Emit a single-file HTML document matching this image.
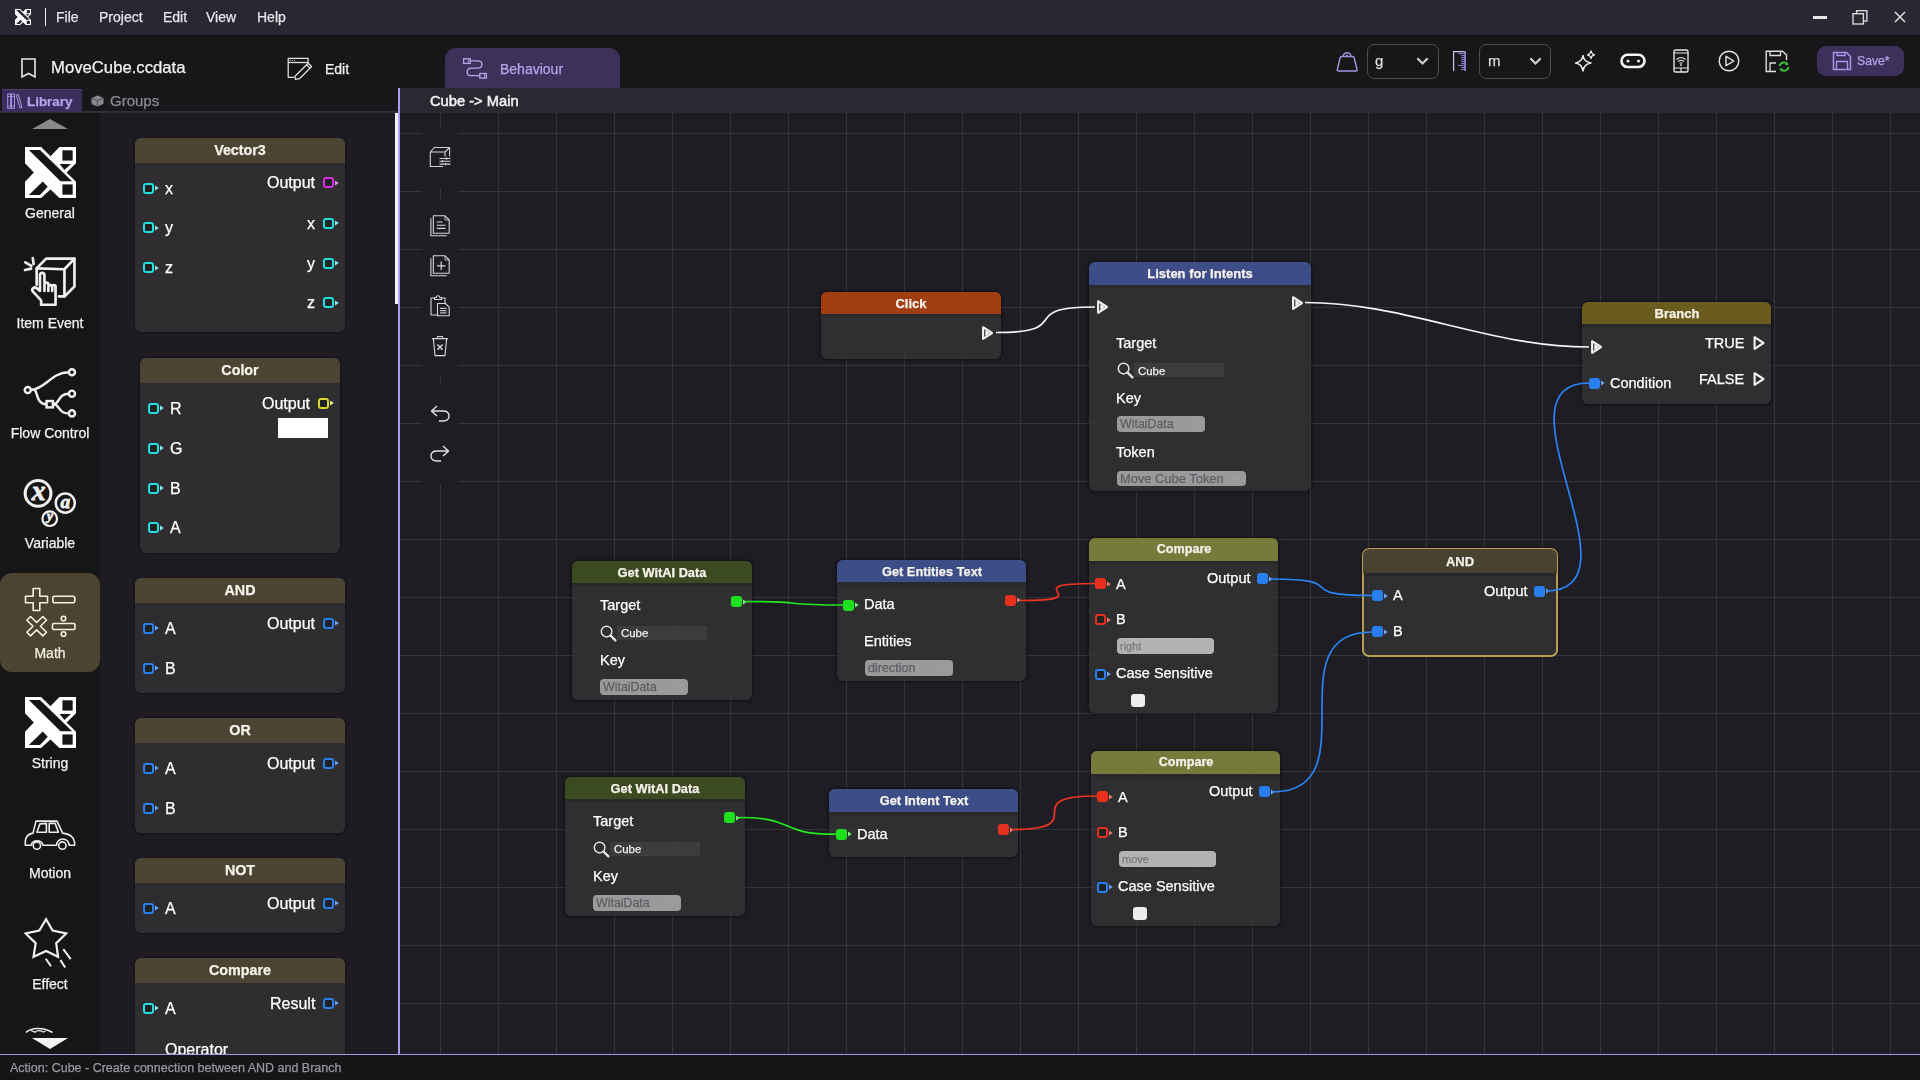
<!DOCTYPE html>
<html><head><meta charset="utf-8">
<style>
*{margin:0;padding:0;box-sizing:border-box}
html,body{width:1920px;height:1080px;overflow:hidden;background:#161517;font-family:"Liberation Sans",sans-serif;color:#fff}
.a{position:absolute}
.t{position:absolute;white-space:nowrap;line-height:normal;will-change:transform;-webkit-text-stroke:0.25px currentColor}
svg{overflow:visible}
</style></head><body>
<div class="a" style="left:0px;top:0px;width:1920px;height:35px;background:#2a2632;"></div>
<div class="a" style="left:0px;top:35px;width:1920px;height:53px;background:#171618;"></div>
<div class="a" style="left:0px;top:35px;width:1920px;height:2px;background:#121114;"></div>
<div class="a" style="left:0px;top:113px;width:100px;height:942px;background:#171617;"></div>
<div class="a" style="left:100px;top:113px;width:298px;height:942px;background:#1e1c22;"></div>
<div class="a" style="left:0px;top:88px;width:398px;height:23px;background:#18171a;"></div>
<div class="a" style="left:0px;top:111px;width:398px;height:2px;background:#302e3a;"></div>
<div class="a" style="left:400px;top:113px;width:1520px;height:941px;background-color:#1e1d23;background-image:linear-gradient(to right,#35343b 0,#35343b 1px,transparent 1px),linear-gradient(to bottom,#35343b 0,#35343b 1px,transparent 1px);background-size:58px 58px;background-position:40px 20px"></div>
<div class="a" style="left:400px;top:88px;width:1520px;height:25px;background:#2b2832;"></div>
<div class="a" style="left:398px;top:88px;width:2px;height:967px;background:#ad9bee;"></div>
<div class="a" style="left:0px;top:1055px;width:1920px;height:25px;background:#151416;"></div>
<div class="a" style="left:0px;top:1054px;width:1920px;height:1px;background:#a897e2;"></div>
<svg class="a" style="left:15px;top:9px;" width="16" height="16" viewBox="80 95 920 920"><path d="M80,95 L370,95 L540,260 L700,95 L1000,95 L1000,390 L830,555 L1000,720 L1000,1015 L700,1015 L540,860 L370,1015 L80,1015 L80,720 L240,555 L80,390Z" fill="#fff"/><path d="M150,150 L350,150 L930,715 L720,715Z" fill="#2a2632"/><path d="M755,155 L940,155 L940,340 L755,340Z" fill="#2a2632"/><path d="M705,400 L910,400 L790,510Z" fill="#2a2632"/><path d="M755,770 L940,770 L940,955 L755,955Z" fill="#2a2632"/><path d="M150,960 L400,718 L490,810 L350,960Z" fill="#2a2632"/></svg>
<div class="a" style="left:45px;top:8px;width:1px;height:18px;background:#eeeef2;"></div>
<div class="t" style="left:55.7px;top:9.33px;font-size:14px;color:#e6e4ea;">File</div>
<div class="t" style="left:98.8px;top:9.33px;font-size:14px;color:#e6e4ea;">Project</div>
<div class="t" style="left:162.7px;top:9.33px;font-size:14px;color:#e6e4ea;">Edit</div>
<div class="t" style="left:206.2px;top:9.33px;font-size:14px;color:#e6e4ea;">View</div>
<div class="t" style="left:256.6px;top:9.33px;font-size:14px;color:#e6e4ea;">Help</div>
<div class="a" style="left:1813px;top:16px;width:14px;height:2.5px;background:#e6e6e6;"></div>
<svg class="a" style="left:1850px;top:8px;" width="20" height="18" viewBox="0 0 20 18"><rect x="6.6" y="2.7" width="10.3" height="10.3" fill="none" stroke="#d8d8d8" stroke-width="1.4"/><rect x="3" y="5.7" width="10.4" height="10.3" fill="#2a2632" stroke="#d8d8d8" stroke-width="1.4"/></svg>
<svg class="a" style="left:1894px;top:11px;" width="12" height="12" viewBox="0 0 12 12"><path d="M1,1 L11,11 M11,1 L1,11" stroke="#e0e0e0" stroke-width="1.5"/></svg>
<svg class="a" style="left:21px;top:58px;" width="15" height="20" viewBox="0 0 15 20"><path d="M1,1 L14,1 L14,19 L7.5,15.5 L1,19Z" fill="none" stroke="#e8e8e8" stroke-width="1.6" stroke-linejoin="miter"/></svg>
<div class="t" style="left:51.0px;top:58.49px;font-size:16.7px;color:#f2f2f2;">MoveCube.ccdata</div>
<svg class="a" style="left:287px;top:57px;" width="26" height="24" viewBox="0 0 26 24"><g fill="none" stroke="#e4e4e4" stroke-width="1.25" stroke-linejoin="round"><path d="M21.1,6 L21.1,1.4 L1.2,1.4 L1.2,20.3 L7,20.3"/><path d="M1.2,5.5 L21.1,5.5"/><path d="M8,19.3 L21.1,6.3 L24.6,9.5 L12.5,21.7 L8.4,22.4Z"/><path d="M19.6,7.9 L23,11.1"/></g><path d="M2.6,3.5 L3.6,3.5 M4.8,3.5 L5.8,3.5 M7,3.5 L8,3.5" stroke="#cfcfcf" stroke-width="1.2"/></svg>
<div class="t" style="left:325.0px;top:60.53px;font-size:14px;color:#f2f2f2;">Edit</div>
<div class="a" style="left:445px;top:48px;width:175px;height:40px;background:#3c3158;border-radius:11px 11px 0 0"></div>
<svg class="a" style="left:462px;top:57px;" width="26" height="23" viewBox="0 0 26 23"><rect x="1.6" y="1.8" width="6.6" height="4.6" fill="none" stroke="#b9a6ee" stroke-width="1.3"/><path d="M6.3,2.5 L6.3,5.7" stroke="#b9a6ee" stroke-width="0.9"/><path d="M8.2,3.9 L15.3,3.9 C21.6,3.9 21.6,11.1 15.3,11.1 L9.3,11.1 C3.8,11.1 3.8,18.7 9.3,18.7 L17.4,18.7" fill="none" stroke="#b9a6ee" stroke-width="1.3"/><rect x="17.8" y="16.5" width="6.6" height="4.6" fill="none" stroke="#b9a6ee" stroke-width="1.3"/><path d="M22.5,17.2 L22.5,20.4" stroke="#b9a6ee" stroke-width="0.9"/></svg>
<div class="t" style="left:500.0px;top:60.53px;font-size:14px;color:#b8a5ec;">Behaviour</div>
<svg class="a" style="left:1336px;top:50px;" width="23" height="22" viewBox="0 0 23 22"><path d="M7.2,6.6 A3.9,3.9 0 0 1 15,6.6" fill="none" stroke="#a592dc" stroke-width="1.5"/><circle cx="10.8" cy="5.6" r="1" fill="#a592dc"/><path d="M5.6,6.6 L16.6,6.6 Q17.8,6.6 18.1,7.8 L21.1,19.6 Q21.4,21 20,21 L2.4,21 Q1,21 1.3,19.6 L4.1,7.8 Q4.4,6.6 5.6,6.6Z" fill="none" stroke="#a592dc" stroke-width="1.5" stroke-linejoin="round"/></svg>
<div class="a" style="left:1367px;top:44px;width:72px;height:35px;background:transparent;border:1px solid #4e4c52;border-radius:7px"></div>
<div class="t" style="left:1375.0px;top:52.42px;font-size:15px;color:#dcdcdc;">g</div>
<svg class="a" style="left:1416px;top:57px;" width="13" height="8" viewBox="0 0 13 8"><path d="M1.3,1.3 L6.5,6.5 L11.7,1.3" fill="none" stroke="#cfcfcf" stroke-width="2.2"/></svg>
<svg class="a" style="left:1452px;top:50px;" width="15" height="22" viewBox="0 0 15 22"><path d="M1.6,21 L1.6,1.6 L13.2,1.6" fill="none" stroke="#cfc6ee" stroke-width="1.2"/><rect x="12.2" y="1" width="1.7" height="20" fill="#a08ae0"/><path d="M6.2,3.6 L12.3,3.6 M9.2,5.6 L12.3,5.6 M9.2,7.6 L12.3,7.6 M9.2,9.6 L12.3,9.6 M9.2,11.6 L12.3,11.6 M9.2,13.6 L12.3,13.6 M6.2,15.4 L12.3,15.4 M9.2,17.4 L12.3,17.4 M9.2,19.4 L12.3,19.4" stroke="#9a84da" stroke-width="1"/></svg>
<div class="a" style="left:1479px;top:44px;width:72px;height:35px;background:transparent;border:1px solid #4e4c52;border-radius:7px"></div>
<div class="t" style="left:1487.5px;top:52.42px;font-size:15px;color:#dcdcdc;">m</div>
<svg class="a" style="left:1528.5px;top:57px;" width="13" height="8" viewBox="0 0 13 8"><path d="M1.3,1.3 L6.5,6.5 L11.7,1.3" fill="none" stroke="#cfcfcf" stroke-width="2.2"/></svg>
<svg class="a" style="left:1575px;top:50px;" width="22" height="22" viewBox="0 0 22 22"><path d="M8,5.5 Q9,12 16,13 Q9,14 8,21 Q7,14 0.5,13 Q7,12 8,5.5Z" fill="none" stroke="#f0f0f0" stroke-width="1.5" stroke-linejoin="round"/><path d="M16,1 Q16.5,4 19.5,4.8 Q16.5,5.5 16,8.5 Q15.5,5.5 12.5,4.8 Q15.5,4 16,1Z" fill="none" stroke="#f0f0f0" stroke-width="1.3" stroke-linejoin="round"/></svg>
<svg class="a" style="left:1620px;top:53px;" width="26" height="16" viewBox="0 0 26 16"><rect x="1.5" y="1.8" width="23" height="12.2" rx="6.1" fill="none" stroke="#f4f4f4" stroke-width="2.6"/><circle cx="8" cy="8" r="1.6" fill="#e8e8e8"/><circle cx="18.5" cy="8" r="1.6" fill="#e8e8e8"/></svg>
<svg class="a" style="left:1673px;top:49px;" width="16" height="24" viewBox="0 0 16 24"><rect x="1" y="1" width="14" height="22" rx="1.5" fill="none" stroke="#e6e6e6" stroke-width="1.4"/><path d="M1,4 L15,4 M1,19 L15,19 M8,19 L8,23" stroke="#e6e6e6" stroke-width="1.2"/><path d="M3.5,10.5 Q8,6.5 12.5,10.5 M5,12.5 Q8,10 11,12.5 M6.6,14.3 Q8,13.3 9.4,14.3" fill="none" stroke="#e6e6e6" stroke-width="1.1"/><circle cx="8" cy="16" r="0.9" fill="#e6e6e6"/></svg>
<svg class="a" style="left:1718px;top:50px;" width="22" height="22" viewBox="0 0 22 22"><circle cx="11" cy="11" r="9.8" fill="none" stroke="#e6e6e6" stroke-width="1.4"/><path d="M8,6.3 L15.8,11 L8,15.7Z" fill="none" stroke="#e6e6e6" stroke-width="1.4" stroke-linejoin="round"/></svg>
<svg class="a" style="left:1765px;top:50px;" width="25" height="23" viewBox="0 0 25 23"><path d="M11,21.5 L1.2,21.5 L1.2,1.2 L17.5,1.2 L21.5,5 L21.5,10" fill="none" stroke="#e0e0e0" stroke-width="1.4"/><path d="M5,1.2 L5,5.5 L15.5,5.5 L15.5,1.2" fill="none" stroke="#e0e0e0" stroke-width="1.3"/><path d="M5,21.5 L5,13 L11,13" fill="none" stroke="#e0e0e0" stroke-width="1.3"/><path d="M14.5,16 A4.5,4.5 0 0 1 22.5,14.2 M23.5,17 A4.5,4.5 0 0 1 15.5,19" fill="none" stroke="#3fc63f" stroke-width="1.8"/><path d="M21,11.5 L23.8,14.6 L20,15.2Z M17,22 L14.2,18.8 L18,18.4Z" fill="#3fc63f"/></svg>
<div class="a" style="left:1817px;top:46px;width:87px;height:30px;background:#3d315c;border-radius:9px"></div>
<svg class="a" style="left:1832px;top:51px;" width="20" height="20" viewBox="0 0 20 20"><path d="M1.5,1.5 L14.5,1.5 L18.5,5.5 L18.5,18.5 L1.5,18.5Z" fill="none" stroke="#ad96e6" stroke-width="1.5"/><path d="M5,1.5 L5,4.5 L13,4.5 L13,1.5" fill="none" stroke="#ad96e6" stroke-width="1.3"/><path d="M4.5,18.5 L4.5,10.5 L15.5,10.5 L15.5,18.5" fill="none" stroke="#ad96e6" stroke-width="1.3"/></svg>
<div class="t" style="left:1856.5px;top:53.96px;font-size:12.2px;color:#b5a0e8;">Save*</div>
<div class="a" style="left:2px;top:89px;width:80px;height:23px;background:#3a2f5c;border-top:1px solid #4a3f6c"></div>
<svg class="a" style="left:7px;top:93px;" width="16" height="16" viewBox="0 0 16 16"><rect x="0.7" y="1" width="3" height="14.3" fill="none" stroke="#a894e4" stroke-width="1"/><rect x="4.5" y="1" width="3" height="14.3" fill="none" stroke="#a894e4" stroke-width="1"/><path d="M0.7,3.5 L3.7,3.5 M4.5,3.5 L7.5,3.5 M0.7,13 L3.7,13 M4.5,13 L7.5,13" stroke="#a894e4" stroke-width="0.8"/><path d="M9.3,2 L11.3,1.5 L15,14.5 L13,15Z" fill="none" stroke="#a894e4" stroke-width="1"/></svg>
<div class="t" style="left:27.2px;top:93.87px;font-size:13.4px;color:#b5a3ea;font-weight:bold;">Library</div>
<svg class="a" style="left:91px;top:94.5px;" width="13" height="12" viewBox="0 0 13 12"><path d="M6.5,0.5 L12.5,3 L12.5,9 L6.5,11.5 L0.5,9 L0.5,3Z" fill="#8a8890"/><path d="M0.5,3 L6.5,5.5 L12.5,3 M6.5,5.5 L6.5,11.5" fill="none" stroke="#4a4850" stroke-width="1"/></svg>
<div class="t" style="left:110.3px;top:92.42px;font-size:15px;color:#8c8a90;">Groups</div>
<div class="t" style="left:430.0px;top:93.10px;font-size:14.7px;color:#f2f2f2;-webkit-text-stroke:0.5px #f2f2f2;">Cube -&gt; Main</div>
<svg class="a" style="left:32px;top:119px;" width="36" height="10" viewBox="0 0 36 10"><path d="M0,10 L18,0 L36,10Z" fill="#8a8a8a"/></svg>
<svg class="a" style="left:24.5px;top:147px;" width="51" height="51" viewBox="80 95 920 920"><path d="M80,95 L370,95 L540,260 L700,95 L1000,95 L1000,390 L830,555 L1000,720 L1000,1015 L700,1015 L540,860 L370,1015 L80,1015 L80,720 L240,555 L80,390Z" fill="#fff"/><path d="M150,150 L350,150 L930,715 L720,715Z" fill="#171617"/><path d="M755,155 L940,155 L940,340 L755,340Z" fill="#171617"/><path d="M705,400 L910,400 L790,510Z" fill="#171617"/><path d="M755,770 L940,770 L940,955 L755,955Z" fill="#171617"/><path d="M150,960 L400,718 L490,810 L350,960Z" fill="#171617"/></svg>
<div class="t" style="left:-150.0px;width:400px;text-align:center;top:204.73px;font-size:14px;color:#f2f2f2;">General</div>
<svg class="a" style="left:20px;top:252px;" width="60" height="60" viewBox="0 0 1080 1080"><g fill="none" stroke="#f0f0f0" stroke-width="48" stroke-linejoin="round" stroke-linecap="round"><path d="M300,590 L300,295 L470,120 L980,120 L980,620 L800,800 L700,800"/><path d="M300,295 L800,310 L980,120 M800,310 L800,800"/><path d="M230,110 L245,215 M95,185 L205,250 M90,325 L200,300"/><path d="M440,700 L440,420 C440,360 360,360 360,420 L360,700 L300,650 C260,620 200,660 230,710 L380,870 L380,950 L640,950 L640,620 C640,590 580,590 580,620 L580,700 M580,640 C580,580 510,580 510,640 L510,700 M510,590 C510,540 440,540 440,590"/></g></svg>
<div class="t" style="left:-150.0px;width:400px;text-align:center;top:315.33px;font-size:14px;color:#f2f2f2;">Item Event</div>
<svg class="a" style="left:20px;top:362px;" width="60" height="60" viewBox="0 0 1080 1080"><g fill="none" stroke="#f0f0f0" stroke-width="44" stroke-linecap="round"><circle cx="140" cy="505" r="55"/><circle cx="935" cy="185" r="55"/><circle cx="935" cy="570" r="55"/><circle cx="935" cy="925" r="55"/><rect x="478" y="703" width="114" height="114"/><path d="M200,505 C470,480 560,190 875,185"/><path d="M270,510 C320,560 300,760 470,760"/><path d="M600,760 C720,760 680,570 875,570"/><path d="M600,760 C720,760 680,925 875,925"/></g></svg>
<div class="t" style="left:-150.0px;width:400px;text-align:center;top:425.33px;font-size:14px;color:#f2f2f2;">Flow Control</div>
<svg class="a" style="left:20px;top:472px;" width="60" height="60" viewBox="0 0 1080 1080"><g fill="none" stroke="#f0f0f0"><circle cx="325" cy="385" r="232" stroke-width="55"/><circle cx="815" cy="560" r="172" stroke-width="45"/><circle cx="535" cy="840" r="132" stroke-width="40"/></g><g fill="#f0f0f0" stroke="#f0f0f0" stroke-width="14" style="font-family:'Liberation Serif';font-weight:bold;font-style:italic" text-anchor="middle"><text x="335" y="500" font-size="500">x</text><text x="818" y="640" font-size="350">a</text><text x="538" y="868" font-size="240">y</text></g></svg>
<div class="t" style="left:-150.0px;width:400px;text-align:center;top:535.33px;font-size:14px;color:#f2f2f2;">Variable</div>
<div class="a" style="left:0px;top:573px;width:100px;height:99px;background:#4a4430;border-radius:12px"></div>
<svg class="a" style="left:20px;top:583px;" width="60" height="60" viewBox="0 0 60 60"><g fill="none" stroke="#f4f0e4" stroke-width="1.6" stroke-linejoin="round"><path d="M13.2,5.5 L19.8,5.5 L19.8,13.2 L27.5,13.2 L27.5,19.8 L19.8,19.8 L19.8,27.5 L13.2,27.5 L13.2,19.8 L5.5,19.8 L5.5,13.2 L13.2,13.2Z"/><rect x="32.8" y="13.2" width="22" height="6.6" rx="2"/><path d="M10.5,33.5 L16.7,39.5 L22.9,33.5 L26.5,37.2 L20.4,43.2 L26.5,49.2 L22.9,52.9 L16.7,46.9 L10.5,52.9 L6.9,49.2 L13,43.2 L6.9,37.2Z"/><rect x="32.5" y="40.5" width="22.5" height="6" rx="1.2"/><circle cx="43.5" cy="35.5" r="2.3"/><circle cx="43.5" cy="51" r="2.3"/></g></svg>
<div class="t" style="left:-150.0px;width:400px;text-align:center;top:644.83px;font-size:14px;color:#f4f0e4;">Math</div>
<svg class="a" style="left:24.5px;top:697px;" width="51" height="51" viewBox="80 95 920 920"><path d="M80,95 L370,95 L540,260 L700,95 L1000,95 L1000,390 L830,555 L1000,720 L1000,1015 L700,1015 L540,860 L370,1015 L80,1015 L80,720 L240,555 L80,390Z" fill="#fff"/><path d="M150,150 L350,150 L930,715 L720,715Z" fill="#171617"/><path d="M755,155 L940,155 L940,340 L755,340Z" fill="#171617"/><path d="M705,400 L910,400 L790,510Z" fill="#171617"/><path d="M755,770 L940,770 L940,955 L755,955Z" fill="#171617"/><path d="M150,960 L400,718 L490,810 L350,960Z" fill="#171617"/></svg>
<div class="t" style="left:-150.0px;width:400px;text-align:center;top:754.83px;font-size:14px;color:#f2f2f2;">String</div>
<svg class="a" style="left:24px;top:819px;" width="52" height="33" viewBox="0 0 52 33"><g fill="none" stroke="#ececec" stroke-width="1.6" stroke-linejoin="round"><path d="M7.1,26.2 L1.3,26.2 L1.3,22.5 C1.5,17.2 5,14.8 9,14.1 L12,2.1 L33,2.1 L38.6,14.1 C43.5,14.6 50,16.5 50.6,23.4 L50.6,26.2 L45.1,26.2 A6.25,6.25 0 0 0 32.6,26.2 L19.1,26.2 A6.25,6.25 0 0 0 7.1,26.2Z"/><path d="M12.9,13.2 L15.9,4.9 L22.4,4.4 L22.4,13.2Z M25.2,4.4 L31.2,4.4 L34.4,13.2 L25.2,13.2Z"/><circle cx="12.9" cy="26.6" r="3.7"/><circle cx="38.4" cy="26.6" r="3.7"/></g></svg>
<div class="t" style="left:-150.0px;width:400px;text-align:center;top:865.33px;font-size:14px;color:#f2f2f2;">Motion</div>
<svg class="a" style="left:24px;top:917px;" width="50" height="52" viewBox="0 0 50 52"><path d="M22.1,2.2 L28.6,13.6 L42.2,16.5 L32.2,26.2 L34.1,39.8 L22.1,34 L9.5,39.8 L11.7,26.2 L1.7,16.5 L15.3,13.6Z" fill="none" stroke="#f0f0f0" stroke-width="2.2" stroke-linejoin="miter" stroke-miterlimit="3"/><path d="M21.8,41.8 L27,49.2 M36.4,43.1 L41.2,50.5 M39.3,32.1 L46.7,42.1" stroke="#f0f0f0" stroke-width="2"/></svg>
<div class="t" style="left:-150.0px;width:400px;text-align:center;top:975.93px;font-size:14px;color:#f2f2f2;">Effect</div>
<svg class="a" style="left:24px;top:1026px;" width="32" height="10" viewBox="0 0 32 10"><path d="M1.8,6.5 C7,1.5 19,0.8 28.5,6.5" fill="none" stroke="#ececec" stroke-width="1.5"/><path d="M7,4.5 L11,6.2 C12.5,4.6 16,4.4 19.5,6 L21.5,5" fill="none" stroke="#ececec" stroke-width="1.3"/></svg>
<div class="a" style="left:0px;top:1036px;width:100px;height:18px;background:#171617;"></div>
<svg class="a" style="left:32px;top:1038px;" width="36" height="11" viewBox="0 0 36 11"><path d="M0,0 L36,0 L18,11Z" fill="#f4f4f4"/></svg>
<div class="a" style="left:135px;top:138px;width:210px;height:194px;background:#2e2d30;border-radius:6px;box-shadow:0 0 2px 1px rgba(0,0,0,0.35);"></div>
<div class="a" style="left:135px;top:138px;width:210px;height:25px;background:#4b4432;border-radius:6px 6px 0 0"></div>
<div class="t" style="left:40.0px;width:400px;text-align:center;top:142.06px;font-size:14.3px;color:#f6f3ec;font-weight:bold;">Vector3</div>
<div class="a" style="left:143.0px;top:182.5px;width:11px;height:11px;border:2px solid #27dede;border-radius:3px;background:#1f2222"></div>
<svg class="a" style="left:154.5px;top:185.0px" width="4" height="6" viewBox="0 0 4 6"><path d="M0,0.5 L3.8,3 L0,5.5Z" fill="#8af0f0"/></svg>
<div class="t" style="left:165.0px;top:179.52px;font-size:16px;color:#fff;">x</div>
<div class="a" style="left:143.0px;top:222.0px;width:11px;height:11px;border:2px solid #27dede;border-radius:3px;background:#1f2222"></div>
<svg class="a" style="left:154.5px;top:224.5px" width="4" height="6" viewBox="0 0 4 6"><path d="M0,0.5 L3.8,3 L0,5.5Z" fill="#8af0f0"/></svg>
<div class="t" style="left:165.0px;top:219.02px;font-size:16px;color:#fff;">y</div>
<div class="a" style="left:143.0px;top:262.0px;width:11px;height:11px;border:2px solid #27dede;border-radius:3px;background:#1f2222"></div>
<svg class="a" style="left:154.5px;top:264.5px" width="4" height="6" viewBox="0 0 4 6"><path d="M0,0.5 L3.8,3 L0,5.5Z" fill="#8af0f0"/></svg>
<div class="t" style="left:165.0px;top:259.02px;font-size:16px;color:#fff;">z</div>
<div class="a" style="left:323.0px;top:177.0px;width:11px;height:11px;border:2px solid #d62ee0;border-radius:3px;background:#1f2222"></div>
<svg class="a" style="left:334.5px;top:179.5px" width="4" height="6" viewBox="0 0 4 6"><path d="M0,0.5 L3.8,3 L0,5.5Z" fill="#e890ee"/></svg>
<div class="t" style="right:1605.0px;top:174.02px;font-size:16px;color:#fff;">Output</div>
<div class="a" style="left:323.0px;top:217.5px;width:11px;height:11px;border:2px solid #27dede;border-radius:3px;background:#1f2222"></div>
<svg class="a" style="left:334.5px;top:220.0px" width="4" height="6" viewBox="0 0 4 6"><path d="M0,0.5 L3.8,3 L0,5.5Z" fill="#8af0f0"/></svg>
<div class="t" style="right:1605.0px;top:214.52px;font-size:16px;color:#fff;">x</div>
<div class="a" style="left:323.0px;top:257.5px;width:11px;height:11px;border:2px solid #27dede;border-radius:3px;background:#1f2222"></div>
<svg class="a" style="left:334.5px;top:260.0px" width="4" height="6" viewBox="0 0 4 6"><path d="M0,0.5 L3.8,3 L0,5.5Z" fill="#8af0f0"/></svg>
<div class="t" style="right:1605.0px;top:254.52px;font-size:16px;color:#fff;">y</div>
<div class="a" style="left:323.0px;top:297.0px;width:11px;height:11px;border:2px solid #27dede;border-radius:3px;background:#1f2222"></div>
<svg class="a" style="left:334.5px;top:299.5px" width="4" height="6" viewBox="0 0 4 6"><path d="M0,0.5 L3.8,3 L0,5.5Z" fill="#8af0f0"/></svg>
<div class="t" style="right:1605.0px;top:294.02px;font-size:16px;color:#fff;">z</div>
<div class="a" style="left:140px;top:358px;width:200px;height:195px;background:#2e2d30;border-radius:6px;box-shadow:0 0 2px 1px rgba(0,0,0,0.35);"></div>
<div class="a" style="left:140px;top:358px;width:200px;height:25px;background:#4b4432;border-radius:6px 6px 0 0"></div>
<div class="t" style="left:40.0px;width:400px;text-align:center;top:362.06px;font-size:14.3px;color:#f6f3ec;font-weight:bold;">Color</div>
<div class="a" style="left:148.0px;top:402.5px;width:11px;height:11px;border:2px solid #27dede;border-radius:3px;background:#1f2222"></div>
<svg class="a" style="left:159.5px;top:405.0px" width="4" height="6" viewBox="0 0 4 6"><path d="M0,0.5 L3.8,3 L0,5.5Z" fill="#8af0f0"/></svg>
<div class="t" style="left:170.0px;top:399.52px;font-size:16px;color:#fff;">R</div>
<div class="a" style="left:148.0px;top:442.5px;width:11px;height:11px;border:2px solid #27dede;border-radius:3px;background:#1f2222"></div>
<svg class="a" style="left:159.5px;top:445.0px" width="4" height="6" viewBox="0 0 4 6"><path d="M0,0.5 L3.8,3 L0,5.5Z" fill="#8af0f0"/></svg>
<div class="t" style="left:170.0px;top:439.52px;font-size:16px;color:#fff;">G</div>
<div class="a" style="left:148.0px;top:482.5px;width:11px;height:11px;border:2px solid #27dede;border-radius:3px;background:#1f2222"></div>
<svg class="a" style="left:159.5px;top:485.0px" width="4" height="6" viewBox="0 0 4 6"><path d="M0,0.5 L3.8,3 L0,5.5Z" fill="#8af0f0"/></svg>
<div class="t" style="left:170.0px;top:479.52px;font-size:16px;color:#fff;">B</div>
<div class="a" style="left:148.0px;top:522.0px;width:11px;height:11px;border:2px solid #27dede;border-radius:3px;background:#1f2222"></div>
<svg class="a" style="left:159.5px;top:524.5px" width="4" height="6" viewBox="0 0 4 6"><path d="M0,0.5 L3.8,3 L0,5.5Z" fill="#8af0f0"/></svg>
<div class="t" style="left:170.0px;top:519.02px;font-size:16px;color:#fff;">A</div>
<div class="a" style="left:318.0px;top:397.5px;width:11px;height:11px;border:2px solid #d8d62a;border-radius:3px;background:#1f2222"></div>
<svg class="a" style="left:329.5px;top:400.0px" width="4" height="6" viewBox="0 0 4 6"><path d="M0,0.5 L3.8,3 L0,5.5Z" fill="#ecec8a"/></svg>
<div class="t" style="right:1610.0px;top:394.52px;font-size:16px;color:#fff;">Output</div>
<div class="a" style="left:278px;top:418px;width:50px;height:20px;background:#ffffff;"></div>
<div class="a" style="left:135px;top:578px;width:210px;height:115px;background:#2e2d30;border-radius:6px;box-shadow:0 0 2px 1px rgba(0,0,0,0.35);"></div>
<div class="a" style="left:135px;top:578px;width:210px;height:25px;background:#4b4432;border-radius:6px 6px 0 0"></div>
<div class="t" style="left:40.0px;width:400px;text-align:center;top:582.06px;font-size:14.3px;color:#f6f3ec;font-weight:bold;">AND</div>
<div class="a" style="left:143.0px;top:622.5px;width:11px;height:11px;border:2px solid #2a7ff0;border-radius:3px;background:#1f2222"></div>
<svg class="a" style="left:154.5px;top:625.0px" width="4" height="6" viewBox="0 0 4 6"><path d="M0,0.5 L3.8,3 L0,5.5Z" fill="#6aa8f4"/></svg>
<div class="t" style="left:165.0px;top:619.52px;font-size:16px;color:#fff;">A</div>
<div class="a" style="left:143.0px;top:662.5px;width:11px;height:11px;border:2px solid #2a7ff0;border-radius:3px;background:#1f2222"></div>
<svg class="a" style="left:154.5px;top:665.0px" width="4" height="6" viewBox="0 0 4 6"><path d="M0,0.5 L3.8,3 L0,5.5Z" fill="#6aa8f4"/></svg>
<div class="t" style="left:165.0px;top:659.52px;font-size:16px;color:#fff;">B</div>
<div class="a" style="left:323.0px;top:617.5px;width:11px;height:11px;border:2px solid #2a7ff0;border-radius:3px;background:#1f2222"></div>
<svg class="a" style="left:334.5px;top:620.0px" width="4" height="6" viewBox="0 0 4 6"><path d="M0,0.5 L3.8,3 L0,5.5Z" fill="#6aa8f4"/></svg>
<div class="t" style="right:1605.0px;top:614.52px;font-size:16px;color:#fff;">Output</div>
<div class="a" style="left:135px;top:718px;width:210px;height:115px;background:#2e2d30;border-radius:6px;box-shadow:0 0 2px 1px rgba(0,0,0,0.35);"></div>
<div class="a" style="left:135px;top:718px;width:210px;height:25px;background:#4b4432;border-radius:6px 6px 0 0"></div>
<div class="t" style="left:40.0px;width:400px;text-align:center;top:722.06px;font-size:14.3px;color:#f6f3ec;font-weight:bold;">OR</div>
<div class="a" style="left:143.0px;top:762.5px;width:11px;height:11px;border:2px solid #2a7ff0;border-radius:3px;background:#1f2222"></div>
<svg class="a" style="left:154.5px;top:765.0px" width="4" height="6" viewBox="0 0 4 6"><path d="M0,0.5 L3.8,3 L0,5.5Z" fill="#6aa8f4"/></svg>
<div class="t" style="left:165.0px;top:759.52px;font-size:16px;color:#fff;">A</div>
<div class="a" style="left:143.0px;top:802.5px;width:11px;height:11px;border:2px solid #2a7ff0;border-radius:3px;background:#1f2222"></div>
<svg class="a" style="left:154.5px;top:805.0px" width="4" height="6" viewBox="0 0 4 6"><path d="M0,0.5 L3.8,3 L0,5.5Z" fill="#6aa8f4"/></svg>
<div class="t" style="left:165.0px;top:799.52px;font-size:16px;color:#fff;">B</div>
<div class="a" style="left:323.0px;top:757.5px;width:11px;height:11px;border:2px solid #2a7ff0;border-radius:3px;background:#1f2222"></div>
<svg class="a" style="left:334.5px;top:760.0px" width="4" height="6" viewBox="0 0 4 6"><path d="M0,0.5 L3.8,3 L0,5.5Z" fill="#6aa8f4"/></svg>
<div class="t" style="right:1605.0px;top:754.52px;font-size:16px;color:#fff;">Output</div>
<div class="a" style="left:135px;top:858px;width:210px;height:75px;background:#2e2d30;border-radius:6px;box-shadow:0 0 2px 1px rgba(0,0,0,0.35);"></div>
<div class="a" style="left:135px;top:858px;width:210px;height:25px;background:#4b4432;border-radius:6px 6px 0 0"></div>
<div class="t" style="left:40.0px;width:400px;text-align:center;top:862.06px;font-size:14.3px;color:#f6f3ec;font-weight:bold;">NOT</div>
<div class="a" style="left:143.0px;top:902.5px;width:11px;height:11px;border:2px solid #2a7ff0;border-radius:3px;background:#1f2222"></div>
<svg class="a" style="left:154.5px;top:905.0px" width="4" height="6" viewBox="0 0 4 6"><path d="M0,0.5 L3.8,3 L0,5.5Z" fill="#6aa8f4"/></svg>
<div class="t" style="left:165.0px;top:899.52px;font-size:16px;color:#fff;">A</div>
<div class="a" style="left:323.0px;top:897.5px;width:11px;height:11px;border:2px solid #2a7ff0;border-radius:3px;background:#1f2222"></div>
<svg class="a" style="left:334.5px;top:900.0px" width="4" height="6" viewBox="0 0 4 6"><path d="M0,0.5 L3.8,3 L0,5.5Z" fill="#6aa8f4"/></svg>
<div class="t" style="right:1605.0px;top:894.52px;font-size:16px;color:#fff;">Output</div>
<div class="a" style="left:135px;top:958px;width:210px;height:120px;background:#2e2d30;border-radius:6px;box-shadow:0 0 2px 1px rgba(0,0,0,0.35);"></div>
<div class="a" style="left:135px;top:958px;width:210px;height:25px;background:#4b4432;border-radius:6px 6px 0 0"></div>
<div class="t" style="left:40.0px;width:400px;text-align:center;top:962.06px;font-size:14.3px;color:#f6f3ec;font-weight:bold;">Compare</div>
<div class="a" style="left:143.0px;top:1002.5px;width:11px;height:11px;border:2px solid #27dede;border-radius:3px;background:#1f2222"></div>
<svg class="a" style="left:154.5px;top:1005.0px" width="4" height="6" viewBox="0 0 4 6"><path d="M0,0.5 L3.8,3 L0,5.5Z" fill="#8af0f0"/></svg>
<div class="t" style="left:165.0px;top:999.52px;font-size:16px;color:#fff;">A</div>
<div class="a" style="left:323.0px;top:997.5px;width:11px;height:11px;border:2px solid #2a7ff0;border-radius:3px;background:#1f2222"></div>
<svg class="a" style="left:334.5px;top:1000.0px" width="4" height="6" viewBox="0 0 4 6"><path d="M0,0.5 L3.8,3 L0,5.5Z" fill="#6aa8f4"/></svg>
<div class="t" style="right:1605.0px;top:994.52px;font-size:16px;color:#fff;">Result</div>
<div class="t" style="left:165.0px;top:1040.52px;font-size:16px;color:#fff;">Operator</div>
<div class="a" style="left:395px;top:113px;width:3px;height:191px;background:#f4f4f4;"></div>
<div class="a" style="left:0px;top:1055px;width:400px;height:25px;background:#151416;"></div>
<div class="a" style="left:0px;top:1054px;width:400px;height:1px;background:#a897e2;"></div>
<div class="a" style="left:420px;top:113px;width:40px;height:371px;background:linear-gradient(to right,rgba(30,29,34,0) 0,#1e1d22 4px,#1e1d22 36px,rgba(30,29,34,0) 40px)"></div>
<div class="a" style="left:440px;top:113px;width:1px;height:15px;background:#35343b;"></div>
<div class="a" style="left:440px;top:188px;width:1px;height:11px;background:#35343b;"></div>
<div class="a" style="left:440px;top:376px;width:1px;height:8px;background:#35343b;"></div>
<svg class="a" style="left:428px;top:145px;" width="24" height="24" viewBox="0 0 24 24"><g fill="none" stroke="#d4d4d6" stroke-width="1.1" stroke-linejoin="round"><path d="M2.3,7 L2.3,21.5 L15,21.5 M2.3,7 L6.3,2.5 L21.6,2.5 L21.6,11.5 M2.3,7 L17,7 L21.6,2.5 M17,7 L17,11.5"/><path d="M11.5,13.5 L22.5,13.5 M11.5,16.3 L22.5,16.3 M11.5,19.1 L22.5,19.1"/><path d="M18.5,12.3 L18.5,14.7 M14.5,15.1 L14.5,17.5 M17.5,17.9 L17.5,20.3"/></g></svg>
<svg class="a" style="left:430px;top:214px;" width="20" height="24" viewBox="0 0 20 24"><g fill="none" stroke="#d8d8da" stroke-width="1.1" stroke-linejoin="round"><path d="M3.3,1.8 L15,1.8 L19.2,6 L19.2,19.3 L3.3,19.3Z" fill="none"/><path d="M15,1.8 L15,6 L19.2,6" fill="none" stroke-width="0.8"/><path d="M0.9,4.3 L0.9,21.8 L16.8,21.8" fill="none"/><path d="M6.8,8 L12.5,8 M6.8,11.2 L15.5,11.2 M6.8,14.4 L15.5,14.4"/></g></svg>
<svg class="a" style="left:430px;top:254px;" width="20" height="24" viewBox="0 0 20 24"><g fill="none" stroke="#d8d8da" stroke-width="1.1" stroke-linejoin="round"><path d="M3.3,1.8 L15,1.8 L19.2,6 L19.2,19.3 L3.3,19.3Z" fill="none"/><path d="M15,1.8 L15,6 L19.2,6" fill="none" stroke-width="0.8"/><path d="M0.9,4.3 L0.9,21.8 L16.8,21.8" fill="none"/><path d="M11.2,7.6 L11.2,16 M7,11.8 L15.4,11.8" stroke-width="1.2"/></g></svg>
<svg class="a" style="left:430px;top:294px;" width="20" height="24" viewBox="0 0 20 24"><g fill="none" stroke="#d8d8da" stroke-width="1.1" stroke-linejoin="round"><path d="M7.5,21 L1,21 L1,4 L4.5,4 M11.5,4 L15,4 L15,9"/><path d="M4.5,5.5 L4.5,3.5 L6.2,3.5 C6.4,1.2 9.6,1.2 9.8,3.5 L11.5,3.5 L11.5,5.5Z"/><path d="M7.5,9.5 L15.5,9.5 L19.2,13.2 L19.2,21.8 L7.5,21.8Z"/><path d="M10,14.3 L16.5,14.3 M10,16.6 L16.5,16.6 M10,18.9 L16.5,18.9" stroke-width="1.3" stroke="#bdbdc0"/></g></svg>
<svg class="a" style="left:430px;top:334px;" width="20" height="24" viewBox="0 0 20 24"><g fill="none" stroke="#d8d8da" stroke-width="1.1" stroke-linejoin="round"><path d="M2,4.6 L18,4.6 M7.5,4.6 L7.5,2.5 L12.5,2.5 L12.5,4.6"/><path d="M3.4,5 L5,21.6 L15,21.6 L16.6,5"/><path d="M7.4,10.4 L12.6,15.8 M12.6,10.4 L7.4,15.8" stroke-width="1.4"/></g></svg>
<svg class="a" style="left:428px;top:402px;" width="24" height="22" viewBox="0 0 24 22"><path d="M9,4 L3.5,9 L9,14 M3.5,9 L15,9 C19.5,9 21,11.5 21,14 C21,16.5 19.5,19 15,19 L11,19" fill="none" stroke="#e2e2e4" stroke-width="1.4" stroke-linejoin="round"/></svg>
<svg class="a" style="left:428px;top:442px;" width="24" height="22" viewBox="0 0 24 22"><path d="M15,4 L20.5,9 L15,14 M20.5,9 L9,9 C4.5,9 3,11.5 3,14 C3,16.5 4.5,19 9,19 L13,19" fill="none" stroke="#e2e2e4" stroke-width="1.4" stroke-linejoin="round"/></svg>
<div class="a" style="left:821px;top:292px;width:180px;height:67px;background:rgba(50,50,52,0.85);border-radius:6px;box-shadow:0 0 3px 1px rgba(0,0,0,0.45);"></div>
<div class="a" style="left:821px;top:292px;width:180px;height:22px;background:rgba(164,61,16,0.96);border-radius:6px 6px 0 0"></div>
<div class="a" style="left:821px;top:314px;width:180px;height:3px;background:rgba(0,0,0,0.12)"></div>
<div class="t" style="left:711.0px;width:400px;text-align:center;top:296.24px;font-size:13px;color:#f6f3ec;font-weight:bold;">Click</div>
<svg class="a" style="left:982px;top:325.5px;" width="11" height="14" viewBox="0 0 11 14"><path d="M1.1,1.2 L10,7 L1.1,12.8Z" fill="none" stroke="#f2f2f2" stroke-width="2.1" stroke-linejoin="round"/><path d="M3.4,3.9 L7.6,7 L3.4,10.1Z" fill="#fff"/></svg>
<div class="a" style="left:1089px;top:262px;width:222px;height:229px;background:rgba(50,50,52,0.85);border-radius:6px;box-shadow:0 0 3px 1px rgba(0,0,0,0.45);"></div>
<div class="a" style="left:1089px;top:262px;width:222px;height:23px;background:rgba(62,79,140,0.95);border-radius:6px 6px 0 0"></div>
<div class="a" style="left:1089px;top:285px;width:222px;height:3px;background:rgba(0,0,0,0.12)"></div>
<div class="t" style="left:1000.0px;width:400px;text-align:center;top:266.34px;font-size:13px;color:#f6f3ec;font-weight:bold;">Listen for Intents</div>
<svg class="a" style="left:1097px;top:300.0px;" width="11" height="14" viewBox="0 0 11 14"><path d="M1.1,1.2 L10,7 L1.1,12.8Z" fill="none" stroke="#f2f2f2" stroke-width="2.1" stroke-linejoin="round"/><path d="M3.4,3.9 L7.6,7 L3.4,10.1Z" fill="#fff"/></svg>
<svg class="a" style="left:1291.5px;top:295.5px;" width="11" height="14" viewBox="0 0 11 14"><path d="M1.1,1.2 L10,7 L1.1,12.8Z" fill="none" stroke="#f2f2f2" stroke-width="2.1" stroke-linejoin="round"/><path d="M3.4,3.9 L7.6,7 L3.4,10.1Z" fill="#fff"/></svg>
<div class="t" style="left:1116.0px;top:335.28px;font-size:14.5px;color:#fff;">Target</div>
<svg class="a" style="left:1117px;top:362px;" width="17" height="17" viewBox="0 0 16 16"><circle cx="6.2" cy="6.2" r="5" fill="none" stroke="#e4e4e4" stroke-width="1.4"/><path d="M10,10 L14.5,14.5" stroke="#e4e4e4" stroke-width="2.2" stroke-linecap="round"/></svg>
<div class="a" style="left:1134px;top:363px;width:90px;height:14px;background:#3c3b3e;"></div>
<div class="t" style="left:1137.5px;top:364.68px;font-size:11.4px;color:#f0f0f0;">Cube</div>
<div class="t" style="left:1116.0px;top:389.68px;font-size:14.5px;color:#fff;">Key</div>
<div class="a" style="left:1117px;top:416px;width:88px;height:15.5px;background:#9a999b;border-radius:4px"></div>
<div class="t" style="left:1120.2px;top:416.58px;font-size:12.4px;color:#5f5e62;">WitaiData</div>
<svg class="a" style="left:1193px;top:421.75px;" width="7" height="4" viewBox="0 0 7 4"><path d="M0.5,0.5 L3.5,3.3 L6.5,0.5" fill="none" stroke="#a8a8ab" stroke-width="0.9"/></svg>
<div class="t" style="left:1116.0px;top:443.68px;font-size:14.5px;color:#fff;">Token</div>
<div class="a" style="left:1117px;top:470.5px;width:128.5px;height:15.5px;background:#9a999b;border-radius:4px"></div>
<div class="t" style="left:1120.2px;top:470.63px;font-size:12.9px;color:#5f5e62;">Move Cube Token</div>
<svg class="a" style="left:1233.5px;top:476.25px;" width="7" height="4" viewBox="0 0 7 4"><path d="M0.5,0.5 L3.5,3.3 L6.5,0.5" fill="none" stroke="#a8a8ab" stroke-width="0.9"/></svg>
<div class="a" style="left:1582px;top:302px;width:189px;height:102px;background:rgba(50,50,52,0.85);border-radius:6px;box-shadow:0 0 3px 1px rgba(0,0,0,0.45);"></div>
<div class="a" style="left:1582px;top:302px;width:189px;height:22px;background:rgba(110,95,30,0.95);border-radius:6px 6px 0 0"></div>
<div class="a" style="left:1582px;top:324px;width:189px;height:3px;background:rgba(0,0,0,0.12)"></div>
<div class="t" style="left:1476.5px;width:400px;text-align:center;top:306.24px;font-size:13px;color:#f6f3ec;font-weight:bold;">Branch</div>
<svg class="a" style="left:1591px;top:340.0px;" width="11" height="14" viewBox="0 0 11 14"><path d="M1.1,1.2 L10,7 L1.1,12.8Z" fill="none" stroke="#f2f2f2" stroke-width="2.1" stroke-linejoin="round"/><path d="M3.4,3.9 L7.6,7 L3.4,10.1Z" fill="#fff"/></svg>
<div class="t" style="right:175.5px;top:334.88px;font-size:14.5px;color:#fff;">TRUE</div>
<svg class="a" style="left:1753px;top:335.6px;" width="12" height="14" viewBox="0 0 11 14"><path d="M1.1,1.2 L10,7 L1.1,12.8Z" fill="none" stroke="#f2f2f2" stroke-width="2.1" stroke-linejoin="round"/></svg>
<div class="t" style="right:175.5px;top:371.08px;font-size:14.5px;color:#fff;">FALSE</div>
<svg class="a" style="left:1753px;top:371.7px;" width="12" height="14" viewBox="0 0 11 14"><path d="M1.1,1.2 L10,7 L1.1,12.8Z" fill="none" stroke="#f2f2f2" stroke-width="2.1" stroke-linejoin="round"/></svg>
<div class="a" style="left:1589.0px;top:377.8px;width:11px;height:11px;border:2px solid #2a7ff0;border-radius:3px;background:#2a7ff0"></div>
<svg class="a" style="left:1600.5px;top:380.3px" width="4" height="6" viewBox="0 0 4 6"><path d="M0,0.5 L3.8,3 L0,5.5Z" fill="#6aa8f4"/></svg>
<div class="t" style="left:1610.0px;top:375.38px;font-size:14.5px;color:#fff;">Condition</div>
<div class="a" style="left:572px;top:561px;width:180px;height:139px;background:rgba(50,50,52,0.85);border-radius:6px;box-shadow:0 0 3px 1px rgba(0,0,0,0.45);"></div>
<div class="a" style="left:572px;top:561px;width:180px;height:22px;background:rgba(60,76,32,0.95);border-radius:6px 6px 0 0"></div>
<div class="a" style="left:572px;top:583px;width:180px;height:3px;background:rgba(0,0,0,0.12)"></div>
<div class="t" style="left:462.0px;width:400px;text-align:center;top:565.42px;font-size:12.8px;color:#f6f3ec;font-weight:bold;">Get WitAI Data</div>
<div class="t" style="left:599.5px;top:597.48px;font-size:14.5px;color:#fff;">Target</div>
<div class="a" style="left:731.0px;top:596.0px;width:11px;height:11px;border:2px solid #1ee01e;border-radius:3px;background:#1ee01e"></div>
<svg class="a" style="left:742.5px;top:598.5px" width="4" height="6" viewBox="0 0 4 6"><path d="M0,0.5 L3.8,3 L0,5.5Z" fill="#7af07a"/></svg>
<svg class="a" style="left:599.5px;top:624.5px;" width="17" height="17" viewBox="0 0 16 16"><circle cx="6.2" cy="6.2" r="5" fill="none" stroke="#e4e4e4" stroke-width="1.4"/><path d="M10,10 L14.5,14.5" stroke="#e4e4e4" stroke-width="2.2" stroke-linecap="round"/></svg>
<div class="a" style="left:617px;top:626px;width:90px;height:14px;background:#3c3b3e;"></div>
<div class="t" style="left:620.5px;top:627.18px;font-size:11.4px;color:#f0f0f0;">Cube</div>
<div class="t" style="left:599.5px;top:651.58px;font-size:14.5px;color:#fff;">Key</div>
<div class="a" style="left:600px;top:679px;width:88px;height:15.5px;background:#9a999b;border-radius:4px"></div>
<div class="t" style="left:603.2px;top:679.58px;font-size:12.4px;color:#5f5e62;">WitaiData</div>
<svg class="a" style="left:676px;top:684.75px;" width="7" height="4" viewBox="0 0 7 4"><path d="M0.5,0.5 L3.5,3.3 L6.5,0.5" fill="none" stroke="#a8a8ab" stroke-width="0.9"/></svg>
<div class="a" style="left:565px;top:777px;width:180px;height:139px;background:rgba(50,50,52,0.85);border-radius:6px;box-shadow:0 0 3px 1px rgba(0,0,0,0.45);"></div>
<div class="a" style="left:565px;top:777px;width:180px;height:22px;background:rgba(60,76,32,0.95);border-radius:6px 6px 0 0"></div>
<div class="a" style="left:565px;top:799px;width:180px;height:3px;background:rgba(0,0,0,0.12)"></div>
<div class="t" style="left:455.0px;width:400px;text-align:center;top:781.42px;font-size:12.8px;color:#f6f3ec;font-weight:bold;">Get WitAI Data</div>
<div class="t" style="left:592.5px;top:813.48px;font-size:14.5px;color:#fff;">Target</div>
<div class="a" style="left:724.0px;top:812.0px;width:11px;height:11px;border:2px solid #1ee01e;border-radius:3px;background:#1ee01e"></div>
<svg class="a" style="left:735.5px;top:814.5px" width="4" height="6" viewBox="0 0 4 6"><path d="M0,0.5 L3.8,3 L0,5.5Z" fill="#7af07a"/></svg>
<svg class="a" style="left:592.5px;top:840.5px;" width="17" height="17" viewBox="0 0 16 16"><circle cx="6.2" cy="6.2" r="5" fill="none" stroke="#e4e4e4" stroke-width="1.4"/><path d="M10,10 L14.5,14.5" stroke="#e4e4e4" stroke-width="2.2" stroke-linecap="round"/></svg>
<div class="a" style="left:610px;top:842px;width:90px;height:14px;background:#3c3b3e;"></div>
<div class="t" style="left:613.5px;top:843.18px;font-size:11.4px;color:#f0f0f0;">Cube</div>
<div class="t" style="left:592.5px;top:867.58px;font-size:14.5px;color:#fff;">Key</div>
<div class="a" style="left:593px;top:895px;width:88px;height:15.5px;background:#9a999b;border-radius:4px"></div>
<div class="t" style="left:596.2px;top:895.58px;font-size:12.4px;color:#5f5e62;">WitaiData</div>
<svg class="a" style="left:669px;top:900.75px;" width="7" height="4" viewBox="0 0 7 4"><path d="M0.5,0.5 L3.5,3.3 L6.5,0.5" fill="none" stroke="#a8a8ab" stroke-width="0.9"/></svg>
<div class="a" style="left:837px;top:560px;width:189px;height:121px;background:rgba(50,50,52,0.85);border-radius:6px;box-shadow:0 0 3px 1px rgba(0,0,0,0.45);"></div>
<div class="a" style="left:837px;top:560px;width:189px;height:22px;background:rgba(62,79,140,0.95);border-radius:6px 6px 0 0"></div>
<div class="a" style="left:837px;top:582px;width:189px;height:3px;background:rgba(0,0,0,0.12)"></div>
<div class="t" style="left:731.5px;width:400px;text-align:center;top:564.42px;font-size:12.8px;color:#f6f3ec;font-weight:bold;">Get Entities Text</div>
<div class="a" style="left:843.0px;top:599.5px;width:11px;height:11px;border:2px solid #1ee01e;border-radius:3px;background:#1ee01e"></div>
<svg class="a" style="left:854.5px;top:602.0px" width="4" height="6" viewBox="0 0 4 6"><path d="M0,0.5 L3.8,3 L0,5.5Z" fill="#7af07a"/></svg>
<div class="t" style="left:864.0px;top:596.48px;font-size:14.5px;color:#fff;">Data</div>
<div class="a" style="left:1005.0px;top:594.9px;width:11px;height:11px;border:2px solid #e8301c;border-radius:3px;background:#e8301c"></div>
<svg class="a" style="left:1016.5px;top:597.4px" width="4" height="6" viewBox="0 0 4 6"><path d="M0,0.5 L3.8,3 L0,5.5Z" fill="#f07a6a"/></svg>
<div class="t" style="left:864.0px;top:632.78px;font-size:14.5px;color:#fff;">Entities</div>
<div class="a" style="left:865px;top:660px;width:87.5px;height:15.7px;background:#9a999b;border-radius:4px"></div>
<div class="t" style="left:868.2px;top:660.60px;font-size:12.6px;color:#5f5e62;">direction</div>
<svg class="a" style="left:940.5px;top:665.85px;" width="7" height="4" viewBox="0 0 7 4"><path d="M0.5,0.5 L3.5,3.3 L6.5,0.5" fill="none" stroke="#a8a8ab" stroke-width="0.9"/></svg>
<div class="a" style="left:829px;top:789px;width:189px;height:68px;background:rgba(50,50,52,0.85);border-radius:6px;box-shadow:0 0 3px 1px rgba(0,0,0,0.45);"></div>
<div class="a" style="left:829px;top:789px;width:189px;height:23px;background:rgba(62,79,140,0.95);border-radius:6px 6px 0 0"></div>
<div class="a" style="left:829px;top:812px;width:189px;height:3px;background:rgba(0,0,0,0.12)"></div>
<div class="t" style="left:723.5px;width:400px;text-align:center;top:793.42px;font-size:12.8px;color:#f6f3ec;font-weight:bold;">Get Intent Text</div>
<div class="a" style="left:836.0px;top:828.9px;width:11px;height:11px;border:2px solid #1ee01e;border-radius:3px;background:#1ee01e"></div>
<svg class="a" style="left:847.5px;top:831.4px" width="4" height="6" viewBox="0 0 4 6"><path d="M0,0.5 L3.8,3 L0,5.5Z" fill="#7af07a"/></svg>
<div class="t" style="left:856.5px;top:826.48px;font-size:14.5px;color:#fff;">Data</div>
<div class="a" style="left:998.0px;top:824.0px;width:11px;height:11px;border:2px solid #e8301c;border-radius:3px;background:#e8301c"></div>
<svg class="a" style="left:1009.5px;top:826.5px" width="4" height="6" viewBox="0 0 4 6"><path d="M0,0.5 L3.8,3 L0,5.5Z" fill="#f07a6a"/></svg>
<div class="a" style="left:1089px;top:538px;width:189px;height:175px;background:rgba(50,50,52,0.85);border-radius:6px;box-shadow:0 0 3px 1px rgba(0,0,0,0.45);"></div>
<div class="a" style="left:1089px;top:538px;width:189px;height:23px;background:rgba(122,126,60,0.95);border-radius:6px 6px 0 0"></div>
<div class="a" style="left:1089px;top:561px;width:189px;height:3px;background:rgba(0,0,0,0.12)"></div>
<div class="t" style="left:983.5px;width:400px;text-align:center;top:542.30px;font-size:12.6px;color:#f6f3ec;font-weight:bold;">Compare</div>
<div class="a" style="left:1095.0px;top:578.2px;width:11px;height:11px;border:2px solid #e8301c;border-radius:3px;background:#e8301c"></div>
<svg class="a" style="left:1106.5px;top:580.7px" width="4" height="6" viewBox="0 0 4 6"><path d="M0,0.5 L3.8,3 L0,5.5Z" fill="#f07a6a"/></svg>
<div class="t" style="left:1116.0px;top:575.88px;font-size:14.5px;color:#fff;">A</div>
<div class="t" style="right:669.5px;top:570.48px;font-size:14.5px;color:#fff;">Output</div>
<div class="a" style="left:1257.0px;top:573.3px;width:11px;height:11px;border:2px solid #2a7ff0;border-radius:3px;background:#2a7ff0"></div>
<svg class="a" style="left:1268.5px;top:575.8px" width="4" height="6" viewBox="0 0 4 6"><path d="M0,0.5 L3.8,3 L0,5.5Z" fill="#6aa8f4"/></svg>
<div class="a" style="left:1095.0px;top:614.2px;width:11px;height:11px;border:2px solid #e8301c;border-radius:3px;background:#1f2222"></div>
<svg class="a" style="left:1106.5px;top:616.7px" width="4" height="6" viewBox="0 0 4 6"><path d="M0,0.5 L3.8,3 L0,5.5Z" fill="#f07a6a"/></svg>
<div class="t" style="left:1116.0px;top:611.18px;font-size:14.5px;color:#fff;">B</div>
<div class="a" style="left:1117px;top:638px;width:97px;height:16px;background:#b3b3b5;border-radius:4px"></div>
<div class="t" style="left:1120.0px;top:640.04px;font-size:11px;color:#7a797c;">right</div>
<div class="a" style="left:1095.0px;top:668.7px;width:11px;height:11px;border:2px solid #2a7ff0;border-radius:3px;background:#1f2222"></div>
<svg class="a" style="left:1106.5px;top:671.2px" width="4" height="6" viewBox="0 0 4 6"><path d="M0,0.5 L3.8,3 L0,5.5Z" fill="#6aa8f4"/></svg>
<div class="t" style="left:1116.0px;top:665.48px;font-size:14.5px;color:#fff;">Case Sensitive</div>
<div class="a" style="left:1131px;top:693.5px;width:14px;height:13.5px;background:#ededf0;border-radius:3px"></div>
<div class="a" style="left:1091px;top:751px;width:189px;height:175px;background:rgba(50,50,52,0.85);border-radius:6px;box-shadow:0 0 3px 1px rgba(0,0,0,0.45);"></div>
<div class="a" style="left:1091px;top:751px;width:189px;height:23px;background:rgba(122,126,60,0.95);border-radius:6px 6px 0 0"></div>
<div class="a" style="left:1091px;top:774px;width:189px;height:3px;background:rgba(0,0,0,0.12)"></div>
<div class="t" style="left:985.5px;width:400px;text-align:center;top:755.30px;font-size:12.6px;color:#f6f3ec;font-weight:bold;">Compare</div>
<div class="a" style="left:1097.0px;top:791.2px;width:11px;height:11px;border:2px solid #e8301c;border-radius:3px;background:#e8301c"></div>
<svg class="a" style="left:1108.5px;top:793.7px" width="4" height="6" viewBox="0 0 4 6"><path d="M0,0.5 L3.8,3 L0,5.5Z" fill="#f07a6a"/></svg>
<div class="t" style="left:1118.0px;top:788.88px;font-size:14.5px;color:#fff;">A</div>
<div class="t" style="right:667.5px;top:783.48px;font-size:14.5px;color:#fff;">Output</div>
<div class="a" style="left:1259.0px;top:786.3px;width:11px;height:11px;border:2px solid #2a7ff0;border-radius:3px;background:#2a7ff0"></div>
<svg class="a" style="left:1270.5px;top:788.8px" width="4" height="6" viewBox="0 0 4 6"><path d="M0,0.5 L3.8,3 L0,5.5Z" fill="#6aa8f4"/></svg>
<div class="a" style="left:1097.0px;top:827.2px;width:11px;height:11px;border:2px solid #e8301c;border-radius:3px;background:#1f2222"></div>
<svg class="a" style="left:1108.5px;top:829.7px" width="4" height="6" viewBox="0 0 4 6"><path d="M0,0.5 L3.8,3 L0,5.5Z" fill="#f07a6a"/></svg>
<div class="t" style="left:1118.0px;top:824.18px;font-size:14.5px;color:#fff;">B</div>
<div class="a" style="left:1119px;top:851px;width:97px;height:16px;background:#b3b3b5;border-radius:4px"></div>
<div class="t" style="left:1122.0px;top:853.04px;font-size:11px;color:#7a797c;">move</div>
<div class="a" style="left:1097.0px;top:881.7px;width:11px;height:11px;border:2px solid #2a7ff0;border-radius:3px;background:#1f2222"></div>
<svg class="a" style="left:1108.5px;top:884.2px" width="4" height="6" viewBox="0 0 4 6"><path d="M0,0.5 L3.8,3 L0,5.5Z" fill="#6aa8f4"/></svg>
<div class="t" style="left:1118.0px;top:878.48px;font-size:14.5px;color:#fff;">Case Sensitive</div>
<div class="a" style="left:1133px;top:906.5px;width:14px;height:13.5px;background:#ededf0;border-radius:3px"></div>
<div class="a" style="left:1363px;top:549px;width:194px;height:107px;background:rgba(50,50,52,0.85);border-radius:6px;box-shadow:0 0 3px 1px rgba(0,0,0,0.45);outline:2px solid #b99b55;outline-offset:-1px;"></div>
<div class="a" style="left:1363px;top:549px;width:194px;height:24px;background:rgba(74,67,48,0.95);border-radius:6px 6px 0 0"></div>
<div class="a" style="left:1363px;top:573px;width:194px;height:3px;background:rgba(0,0,0,0.12)"></div>
<div class="t" style="left:1260.0px;width:400px;text-align:center;top:554.03px;font-size:13px;color:#f6f3ec;font-weight:bold;">AND</div>
<div class="a" style="left:1372.0px;top:590.1px;width:11px;height:11px;border:2px solid #2a7ff0;border-radius:3px;background:#2a7ff0"></div>
<svg class="a" style="left:1383.5px;top:592.6px" width="4" height="6" viewBox="0 0 4 6"><path d="M0,0.5 L3.8,3 L0,5.5Z" fill="#6aa8f4"/></svg>
<div class="t" style="left:1393.0px;top:587.38px;font-size:14.5px;color:#fff;">A</div>
<div class="a" style="left:1372.0px;top:626.3px;width:11px;height:11px;border:2px solid #2a7ff0;border-radius:3px;background:#2a7ff0"></div>
<svg class="a" style="left:1383.5px;top:628.8px" width="4" height="6" viewBox="0 0 4 6"><path d="M0,0.5 L3.8,3 L0,5.5Z" fill="#6aa8f4"/></svg>
<div class="t" style="left:1393.0px;top:623.48px;font-size:14.5px;color:#fff;">B</div>
<div class="t" style="right:392.0px;top:583.48px;font-size:14.5px;color:#fff;">Output</div>
<div class="a" style="left:1534.0px;top:585.5px;width:11px;height:11px;border:2px solid #2a7ff0;border-radius:3px;background:#2a7ff0"></div>
<svg class="a" style="left:1545.5px;top:588.0px" width="4" height="6" viewBox="0 0 4 6"><path d="M0,0.5 L3.8,3 L0,5.5Z" fill="#6aa8f4"/></svg>
<svg class="a" style="left:0;top:0" width="1920" height="1080" viewBox="0 0 1920 1080"><path d="M996,332.5 C1078,332.5 1013,307 1095,307" fill="none" stroke="#f4f4f4" stroke-width="1.7"/><path d="M1305,302.5 C1405,302.5 1489,347 1589,347" fill="none" stroke="#f4f4f4" stroke-width="1.7"/><path d="M745,601.5 C815,601.5 773,605 843,605" fill="none" stroke="#22e822" stroke-width="1.7"/><path d="M1020,600.5 C1105,600.5 1010,583.5 1095,583.5" fill="none" stroke="#ec3420" stroke-width="1.7"/><path d="M1271,579 C1356,579 1287,595.5 1372,595.5" fill="none" stroke="#2a84f4" stroke-width="1.7"/><path d="M1272,792 C1372,792 1272,632 1372,632" fill="none" stroke="#2a84f4" stroke-width="1.7"/><path d="M1546,591 C1646,591 1489,383 1589,383" fill="none" stroke="#2a84f4" stroke-width="1.7"/><path d="M738,817.5 C800,817.5 774,834.2 836,834.2" fill="none" stroke="#22e822" stroke-width="1.7"/><path d="M1012,829.5 C1096,829.5 1013,796 1097,796" fill="none" stroke="#ec3420" stroke-width="1.7"/></svg>
<div class="t" style="left:10.0px;top:1060.69px;font-size:12.5px;color:#9a989e;">Action: Cube - Create connection between AND and Branch</div>
</body></html>
